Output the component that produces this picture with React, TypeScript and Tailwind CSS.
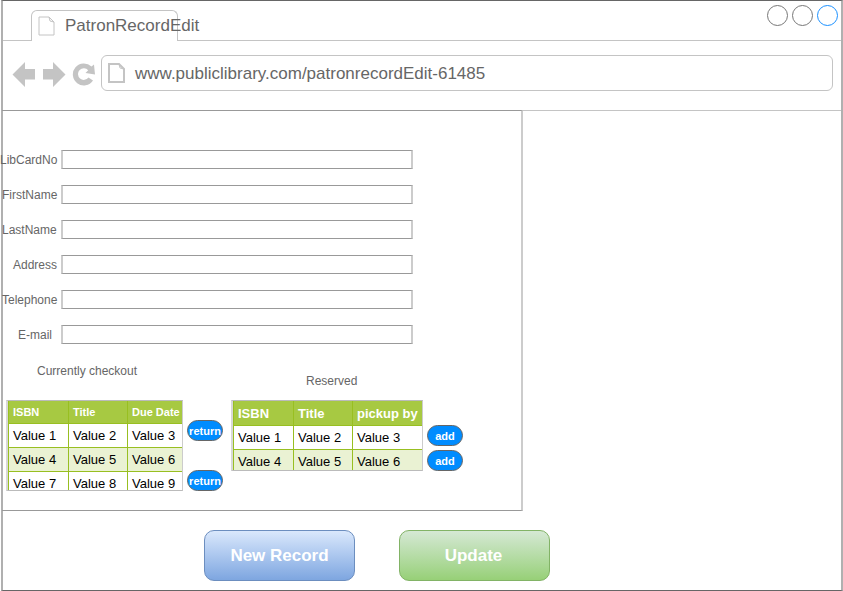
import React from "react";

const fields = [
  { label: "LibCardNo", indent: "pl-0" },
  { label: "FirstName", indent: "pl-[2px]" },
  { label: "LastName", indent: "pl-[2px]" },
  { label: "Address", indent: "pl-[13px]" },
  { label: "Telephone", indent: "pl-[2px]" },
  { label: "E-mail", indent: "pl-[18px]" },
];

function PageIcon({ stroke, className }: { stroke: number; className: string }) {
  return (
    <svg className={className} viewBox="0 0 17 20" fill="none" stroke="#c4c4c4" strokeWidth={stroke}>
      <path d="M1 1H11L16 6V19H1Z" />
      <path d="M11 1L12 5L16 6" strokeWidth="1" />
    </svg>
  );
}

function DataTable({
  headers,
  rows,
  headSize,
  headHeight,
  className,
}: {
  headers: string[];
  rows: string[][];
  headSize: string;
  headHeight: string;
  className: string;
}) {
  const cell = "shrink-0 pl-1 border-l border-[#98bf21] whitespace-nowrap";
  const widths = ["w-[60px]", "w-[59px]", "w-[70px]"];
  return (
    <div className={`overflow-hidden border-y border-r border-l-2 border-y-[#bbb] border-r-[#ccc] border-l-[#d8d8d8] ${className}`}>
      <div className={`flex bg-[#a7c942] font-bold text-white ${headSize} ${headHeight}`}>
        {headers.map((h, i) => (
          <div key={h} className={`${cell} ${widths[i]}`}>{h}</div>
        ))}
      </div>
      {rows.map((row, r) => (
        <div
          key={r}
          className={`flex h-6 border-t border-[#98bf21] text-[13px] leading-[23px] text-black ${r % 2 ? "bg-[#eaf2d3]" : "bg-white"}`}
        >
          {row.map((v, i) => (
            <div key={v} className={`${cell} ${widths[i]}`}>{v}</div>
          ))}
        </div>
      ))}
    </div>
  );
}

function Pill({ children }: { children: string }) {
  return (
    <button className="flex h-[21px] w-[36px] items-center justify-center rounded-full border border-[#666] bg-[#008cff] pt-px text-[11px] font-bold text-white">
      {children}
    </button>
  );
}

export default function App() {
  return (
    <div className="h-[591px] w-[843px] overflow-hidden bg-white font-['Liberation_Sans',Arial,sans-serif] text-[#666]">
      <div className="ml-px flex h-[591px] w-[842px] flex-col border-x-2 border-y border-x-[#b0b0b0] border-y-[#666]">
        <header className="flex h-10 shrink-0">
          <div className="w-[28px] border-b border-[#c4c4c4]" />
          <div className="mt-[9px] flex w-[147px] rounded-t-[6px] border border-b-0 border-[#c4c4c4] pl-[6px] pt-[6px]">
            <PageIcon stroke={1} className="-mt-px h-[20px] w-[17px] shrink-0" />
            <span className="-mt-px ml-[10px] whitespace-nowrap text-[17px] leading-[20px]">PatronRecordEdit</span>
          </div>
          <div className="flex flex-1 justify-end gap-1 border-b border-[#c4c4c4] pr-[3px] pt-1">
            <i className="size-[21px] rounded-full border border-[#777]" />
            <i className="size-[21px] rounded-full border border-[#777]" />
            <i className="size-[21px] rounded-full border border-[#1a90ff]" />
          </div>
        </header>
        <div className="flex h-[70px] shrink-0 border-b border-[#c4c4c4] pt-[14px]">
          <svg className="ml-[9px] mt-[5px] h-[30px] w-[84px] shrink-0" viewBox="0 0 84 30" fill="#c4c4c4">
            <path d="M.5 14.500L13 2V9H23V19.500H13V27Z" />
            <path d="M53.500 14.500L41 2V9H31V19.500H41V27Z" />
            <path d="M83 14.500L73.500 13L76.200 10.300A5.800 5.800 0 1 0 76.500 17.500L81 20.500A11 11 0 1 1 79.500 6.500L82 4.500Z" />
          </svg>
          <div className="ml-[5px] flex h-[36px] w-[732px] rounded-[6px] border border-[#c4c4c4] pl-[6px]">
            <PageIcon stroke={2} className="mt-[7px] h-[20px] w-[17px] shrink-0" />
            <span className="ml-[10px] mt-[8px] whitespace-nowrap text-[17px] leading-[20px]">www.publiclibrary.com/patronrecordEdit-61485</span>
          </div>
        </div>
        <main className="-ml-px -mt-px h-[401px] w-[521px] shrink-0 border-y border-r-2 border-y-[#999] border-r-[#ccc]">
          <div className="-ml-[2px] flex flex-col gap-4 pt-[39px]">
            {fields.map((f) => (
              <label key={f.label} className="flex h-[19px]">
                <span className={`w-[61px] shrink-0 whitespace-nowrap text-xs leading-[21px] ${f.indent}`}>{f.label}</span>
                <input className="h-[19px] w-[352px] border-x-2 border-y border-x-[#ccc] border-y-[#999] bg-white" />
              </label>
            ))}
          </div>
          <div className="flex">
            <section className="ml-[4px] w-[176px]">
              <h2 className="ml-[31px] pt-[19px] text-xs leading-[16px]">Currently checkout</h2>
              <DataTable
                className="mt-[21px] h-[91px] w-[177px]"
                headers={["ISBN", "Title", "Due Date"]}
                rows={[
                  ["Value 1", "Value 2", "Value 3"],
                  ["Value 4", "Value 5", "Value 6"],
                  ["Value 7", "Value 8", "Value 9"],
                ]}
                headSize="text-[11px]"
                headHeight="h-[22px] leading-[22px]"
              />
            </section>
            <div className="ml-[5px] flex flex-col gap-[29px] pt-[76px]">
              <Pill>return</Pill>
              <Pill>return</Pill>
            </div>
            <section className="ml-[8px] w-[192px]">
              <h2 className="ml-[75px] pt-[29px] text-xs leading-[16px]">Reserved</h2>
              <DataTable
                className="mt-[11px] h-[71px] w-[192px]"
                headers={["ISBN", "Title", "pickup by"]}
                rows={[
                  ["Value 1", "Value 2", "Value 3"],
                  ["Value 4", "Value 5", "Value 6"],
                ]}
                headSize="text-[13px]"
                headHeight="h-[24px] leading-[25px]"
              />
            </section>
            <div className="ml-[4px] flex flex-col gap-1 pt-[81px]">
              <Pill>add</Pill>
              <Pill>add</Pill>
            </div>
          </div>
        </main>
        <footer className="ml-[201px] mt-[19px] flex gap-[44px] text-[17px] font-bold text-white">
          <button className="h-[51px] w-[151px] rounded-[10px] border border-[#6c8ebf] bg-linear-to-b from-[#dae8fc] to-[#7ea6e0]">New Record</button>
          <button className="h-[51px] w-[151px] rounded-[10px] border border-[#82b366] bg-linear-to-b from-[#d5e8d4] to-[#97d077] pr-0.5">Update</button>
        </footer>
      </div>
    </div>
  );
}
